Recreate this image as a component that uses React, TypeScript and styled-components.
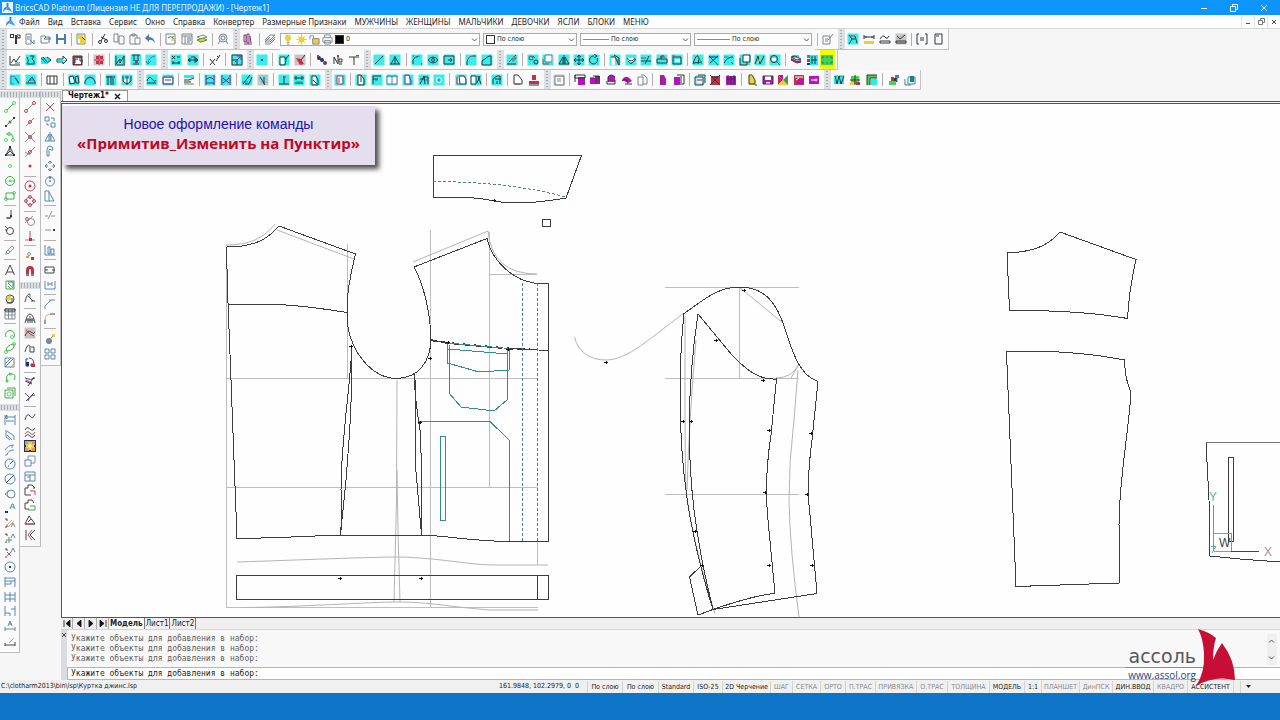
import React from 'react';
import styled, { createGlobalStyle, css } from 'styled-components';

const ui = '"Noto Sans", "Open Sans", sans-serif';
const dialog = '"DejaVu Sans Condensed", "DejaVu Sans", sans-serif';

const Global = createGlobalStyle`
  *, *::before, *::after { box-sizing: border-box; }
  body { margin: 0; background: #0d74c8; font-family: ${ui}; font-size: 8px; color: #222; }
  button, select, input { font: inherit; color: inherit; margin: 0; }
  a { text-decoration: none; color: inherit; }
`;

const Shell = styled.div`
  display: flex;
  flex-direction: column;
  min-height: 100vh;
  overflow: hidden;
`;

/* ---------- title and menu ---------- */

const TitleBar = styled.header`
  display: flex;
  align-items: center;
  height: 15px;
  padding: 0 2px;
  gap: 2px;
  background: #0e95fd;
  color: #e6f5ff;
`;

const TitleText = styled.h1`
  flex: 1;
  margin: 0;
  font-size: 8px;
  line-height: 15px;
  font-weight: 400;
`;

const WindowButton = styled.button<{ $small?: boolean }>`
  display: grid;
  place-items: center;
  width: ${(p) => (p.$small ? 13 : 28)}px;
  height: 12px;
  padding: 0;
  border: 0;
  border-left: ${(p) => (p.$small ? '1px solid #e2e2e2' : '0')};
  background: none;
`;

const MenuBar = styled.nav`
  display: flex;
  align-items: center;
  height: 14px;
  padding-left: 5px;
  background: #fff;
  border-bottom: 1px solid #d6d6d6;
`;

const MenuList = styled.div`
  display: flex;
  flex: 1;
  gap: 8px;
  margin-left: 3px;
`;

const MenuLink = styled.a`
  font-size: 8px;
  line-height: 12px;
  color: #1c1c1c;
  white-space: nowrap;
`;

/* ---------- toolbars ---------- */

const Toolbars = styled.section`
  background: #f6f6f6;
`;

const ToolRow = styled.div`
  display: flex;
  height: 21px;
  & + & { height: 20px; }
`;

const ToolGroup = styled.div<{ $width: number }>`
  display: flex;
  align-items: stretch;
  flex: 0 0 ${(p) => p.$width}px;
  padding-right: 2px;
  background: #fafafa;
  border-bottom: 1px solid #c4bfc2;
  &:last-child { border-right: 1px solid #c9c4c7; }
`;

const Grip = styled.span<{ $flat?: boolean }>`
  flex: none;
  background-color: #dcdfe3;
  background-image: radial-gradient(#a9acb1 1px, transparent 1px);
  ${(p) =>
    p.$flat
      ? css`height: 7px; margin-bottom: 2px; background-size: 3px 7px;`
      : css`width: 7px; background-size: 7px 3px;`}
`;

const Tool = styled.button<{ $glow?: boolean }>`
  display: grid;
  place-items: center;
  flex: 1 1 0;
  min-width: 0;
  min-height: 0;
  padding: 0;
  border: 0;
  background: ${(p) => (p.$glow ? '#f4fb04' : 'none')};
  svg { display: block; }
`;

const Divider = styled.i<{ $flat?: boolean }>`
  flex: 0.35 1 0;
  display: grid;
  place-items: center;
  &::before {
    content: '';
    background: #b4b0b2;
    ${(p) => (p.$flat ? css`width: 12px; height: 1px;` : css`width: 1px; height: 13px;`)}
  }
`;

const Picker = styled.label<{ $width: number }>`
  position: relative;
  display: flex;
  align-items: center;
  align-self: center;
  flex: 0 0 ${(p) => p.$width}px;
  height: 13px;
  margin-right: 3px;
  padding-left: 2px;
  gap: 2px;
  background: #fff;
  border: 1px solid #a9a9a9;
  & > svg { flex: none; }
`;

const PickerSelect = styled.select`
  appearance: none;
  flex: 1;
  min-width: 0;
  height: 11px;
  padding: 0;
  border: 0;
  background: none;
  font-family: ${dialog};
  font-size: 7px;
  line-height: 11px;
`;

const Swatch = styled.span<{ $color: string }>`
  flex: none;
  width: 9px;
  height: 9px;
  background: ${(p) => p.$color};
  border: 1px solid #333;
`;

const LineSample = styled.span<{ $length: number }>`
  flex: 0 0 ${(p) => p.$length}px;
  height: 1px;
  background: #8a8a8a;
`;

/* ---------- work area ---------- */

const Work = styled.main`
  display: flex;
  flex: 1 1 auto;
  background: #f6f6f6;
`;

const Rails = styled.aside`
  display: flex;
  align-items: flex-start;
  flex: 0 0 61px;
  padding-top: 1px;
`;

const Rail = styled.div`
  display: flex;
  flex-direction: column;
  flex: 1;
  border-right: 1px solid #bdbdbd;
  border-bottom: 1px solid #bdbdbd;
  background: #fafafa;
`;

const RailGroup = styled.div<{ $height: number }>`
  display: flex;
  flex-direction: column;
  height: ${(p) => p.$height}px;
  padding-bottom: 4px;
`;

const Stage = styled.div`
  display: flex;
  flex-direction: column;
  flex: 1;
  min-width: 0;
`;

const FileTabs = styled.div`
  display: flex;
  height: 12px;
  padding-left: 1px;
  border-bottom: 1px solid #555;
`;

const FileTab = styled.div`
  display: flex;
  align-items: center;
  gap: 5px;
  height: 11px;
  padding: 0 6px 0 5px;
  border: 1px solid #999;
  border-bottom: 0;
  background: #fff;
  font: 700 8px/10px ${dialog};
  color: #111;
`;

const PlainButton = styled.button`
  display: grid;
  place-items: center;
  padding: 0;
  border: 0;
  background: none;
`;

const Canvas = styled.div`
  position: relative;
  flex: 1 1 auto;
  margin-top: 1px;
  border-top: 1px solid #555;
  border-left: 1px solid #555;
  border-bottom: 1px solid #555;
  background: #fefefe;
  overflow: hidden;
  & > svg { display: block; width: 100%; height: 513px; }
`;

const Notice = styled.div`
  position: absolute;
  left: 0;
  top: 2px;
  width: 313px;
  height: 59px;
  padding-top: 9px;
  background: #e5deee;
  box-shadow: 4px 4px 5px rgba(0, 0, 0, 0.7);
  text-align: center;
`;

const NoticeLead = styled.p`
  margin: 0;
  font: 400 14px/19px "Liberation Sans", sans-serif;
  color: #2310b4;
`;

const NoticeTitle = styled.p`
  margin: 0;
  font: 700 15px/19px "Open Sans", sans-serif;
  color: #c3061f;
`;

const SheetTabs = styled.div`
  display: flex;
  align-items: center;
  height: 11px;
  background: #efefef;
  font-family: ${dialog};
`;

const SheetStep = styled.button`
  display: grid;
  place-items: center;
  width: 12px;
  height: 11px;
  padding: 0;
  border: 0;
  border-right: 1px solid #aaa;
  background: none;
`;

const SheetTab = styled.button<{ $active?: boolean }>`
  height: 11px;
  padding: 0 1px;
  border: 0;
  border-right: 1px solid #777;
  background: ${(p) => (p.$active ? '#fff' : 'none')};
  font-weight: ${(p) => (p.$active ? 700 : 400)};
  line-height: 10px;
`;

const Console = styled.section`
  display: flex;
  height: 51px;
  border-top: 1px solid #d5d5d5;
`;

const ConsoleGrip = styled.div`
  display: flex;
  flex-direction: column;
  align-items: center;
  flex: 0 0 6px;
  padding-top: 2px;
  background: #d9dce1;
`;

const ConsoleBody = styled.div`
  display: flex;
  flex-direction: column;
  flex: 1;
  font: 400 8px/10px "DejaVu Sans Mono", monospace;
`;

const History = styled.div`
  display: flex;
  flex: 1;
  justify-content: space-between;
  padding: 4px 3px 2px 4px;
  background: #f8f8f8;
  color: #5d5d5d;
  white-space: pre-line;
`;

const Scroll = styled.div`
  display: flex;
  flex-direction: column;
  justify-content: space-between;
  width: 10px;
  padding: 4px 0;
  background: #f0f0f0;
`;

const CommandInput = styled.input`
  width: 100%;
  height: 13px;
  padding: 0 3px;
  border: 1px solid #b5b5b5;
  border-right: 0;
  background: #fff;
  color: #1d1d1d;
`;

const StatusBar = styled.footer`
  display: flex;
  align-items: center;
  height: 13px;
  background: #f0f0f0;
  font: 400 7px/13px ${dialog};
`;

const StatusPath = styled.span`
  flex: 1;
  padding-left: 1px;
  white-space: nowrap;
`;

const StatusCoords = styled.output`
  flex: 0 0 88px;
  white-space: nowrap;
`;

const StatusItem = styled.button<{ $width: number; $off?: boolean }>`
  flex: 0 0 ${(p) => p.$width}px;
  height: 12px;
  padding: 0;
  border: 0;
  border-left: 1px solid #d4d4d4;
  background: none;
  color: ${(p) => (p.$off ? '#8b8b8b' : '#1d1d1d')};
  line-height: 12px;
  white-space: nowrap;
`;

const TaskStrip = styled.div`
  height: 27px;
  background: #0d74c8;
`;

const Brand = styled.a`
  position: absolute;
  right: 44px;
  bottom: 33px;
  display: flex;
  align-items: flex-end;
`;

const BrandWords = styled.span`
  display: flex;
  flex-direction: column;
  align-items: flex-end;
  margin-right: -8px;
  padding-bottom: 5px;
`;

const BrandName = styled.span`
  padding-left: 3px;
  padding-right: 8px;
  border-bottom: 1px solid #858b98;
  font: 400 19px/21px "DejaVu Sans", sans-serif;
  color: #55555a;
`;

const BrandUrl = styled.span`
  padding-right: 8px;
  font: 400 10px/14px "Open Sans", sans-serif;
  color: #1e3f80;
`;

const Frame = styled.div`
  position: relative;
  display: flex;
  flex-direction: column;
  flex: 1;
`;

/* ---------- icon set ----------
   Each entry is "Label; c d; C d": a lower-case colour key strokes the path,
   an upper-case key fills it. "~" puts the icon on a cyan tile, "!" on a grey one. */

const ink: Record<string, string> = {
  k: '#30373d', r: '#c3304a', g: '#3f9a45', b: '#4a7dad', c: '#18f2f0', m: '#b414bc',
  y: '#ecd03a', w: '#ffffff', s: '#7b868d', n: '#1c2f80', t: '#15877f', l: '#43d552', p: '#7f2a72', o: '#dc9a4c',
};

const Glyph = ({ spec, size = 12, weight = 1 }: { spec: string; size?: number; weight?: number }) => {
  const parts = spec.split(';').slice(1).map((s) => s.trim());
  return (
    <svg width={size} height={size} viewBox="0 0 12 12" aria-hidden="true">
      {parts.map((part, i) => {
        if (part === '~') return <rect key={i} x=".5" y=".5" width="11" height="11" fill="#35eeee" />;
        if (part === '!') return <rect key={i} x=".5" y=".5" width="11" height="11" fill="#c9c5c4" />;
        const key = part[0];
        const solid = key === key.toUpperCase();
        const color = ink[key.toLowerCase()];
        return <path key={i} d={part.slice(2)} fill={solid ? color : 'none'} stroke={solid ? 'none' : color} strokeWidth={weight} />;
      })}
    </svg>
  );
};

const ring = (x: number, y: number, r: number) => `M${x - r} ${y}a${r} ${r} 0 1 0 ${2 * r} 0a${r} ${r} 0 1 0 ${-2 * r} 0z`;
const node = (x: number, y: number) => ring(x, y, 1.5);

const rowFile1 = [
  'New wizard; K M1 1h4v4H1z; W M2 2h2v2H2z; K M6 2h2v9H6z; k M8 2h3v3M8 5h3; r M8 3l2 2',
  'New; s M2 1h5v10H2zM3 4h3M3 6h3; b M6 7l4 4M10 7v4',
  'Open; s M1 3h4l1 1h4v2M1 3v7h7; b M4 6h7M9 4v6M4 6l2-2',
  'Save; B M1 1h10v10H1z; W M3 1h6v4H3z; W M3 7h6v4H3z',
  '|',
  'Render; s M1 1h8v10H1z; Y M2 2h5v4H2z; Y M4 5h6v5H4z; k M6 4l3 3',
  '|',
  'Cut; k M8 1L4 8M4 4l6 3; k ' + ring(3, 9, 1.5) + '; k ' + ring(9, 8, 1.5),
  'Copy; s M1 1h4v8H1zM6 3h4l1 1v7H6z',
  'Paste; s M1 2h7v9H1zM3 1h3v2H3z; W M6 5h5v6H6z; s M6 5h5v6H6z',
  'Undo; B M1 5l4-4v3q5 0 6 6q-3-4-6-3v2z',
  '|',
  'Regen; s M1 1h9v10H1z; g M3 5q3-3 5 0M8 3v3; o M6 7h4v3',
  'Properties; s M1 1h10v10H1zM1 3h10M4 3v8; b M6 5h4M6 7h4M6 9h3',
  'Layers; s M1 4l6-2 4 2-6 2z; Y M1 7l6-2 4 2-6 3z; g M1 7l6-2 4 2-6 2z',
  '|',
  'Zoom; s ' + ring(6, 5, 4) + '; b ' + ring(6, 5, 2) + '; s M3 8L1 11M9 8l2 3',
];
const rowFile2 = ['Book; p M2 2h2v7H2zM5 1h2v9H5zM2 11h8M8 3l1 7', '|', 'Layer list; s M1 7l5-5h5l-5 5zM1 9l5-5M1 11h5l5-5M1 9h5l5-5'];
const rowFile3 = [
  'Dimension check; ~; k M2 2l3 4-3 5M5 6h3M8 3l2 7; r M3 3h5',
  'Linear gauge; k M1 4h10M1 2v4M11 2v4M3 3v2M9 3v2; Y M1 8h10v3H1z',
  'Path gauge; k M1 6q3-5 5-2t4-1M1 8h10v2H1z',
  'Area gauge; !; k M2 3l3 3 5-4M1 8h10v2H1z',
  '|',
  'Match; k M3 1H1v10h2M9 1h2v10H9M4 5h4M4 7h4',
  'Sheet; k M3 1h7v10H3zM4 3h3',
];

const row2a = [
  'Graph; k M1 2v9h10M2 9l3-4 2 3 4-6; t M6 9h5',
  'Part; ~; k M2 3q3 4 0 7h7V7l-2-2 2-3H5',
  'Wave right; C M1 3h6l4 3-4 4H1z; k M1 4l5 5M3 3l4 5M7 3l4 3-4 3',
  'Arrow; k M1 5h6V2l4 4-4 4V8H1z; C M2 6h8v1H2z',
  'Frame; R M1 2h9v9H1z; W M3 4h6v6H3z; k M1 2h9v9H1z; k M3 9V5h3M8 3v4h3',
  '|',
  'Target; !; R M3 2h3v3H3zM7 2h3v3H7zM3 7h3v3H3zM7 7h3v3H7z; r M6 1v10M1 6h10',
  '|',
  'Bars; ~; k M2 2v8M10 2v8M2 10l4-5v4l4-7M1 11h10',
  'Tree; ~; k M2 1h8M4 1v6M8 1v6M3 10h6; R M5 6h3v3H5z',
  'Back turn; ~; b M10 2Q4 3 3 9M1 7l2 3 3-3',
];
const row2b = ['Width; ~; k M2 2l3 3M5 2L2 5M7 3h3M2 9h8M3 7v3M9 7v3', 'Swap; ~; k M1 6h10M1 6l2-2v4zM11 6L9 4v4z; k M4 3h4v6', '|', 'Formula; k M1 5l5 6M6 5l-5 6M7 7l4-6M8 2l2 2', '|', 'Resize; ~; k M1 1h10v10H1zM1 6h5v5; p M4 8l5-5M6 2h4v4'];
const row2c = ['Dot; ~; N M5 5h2v2H5z', '|', 'Pocket edit; ~; W M2 3h4v7H2z; k M2 3h5l1 3-1 5H2z; k M7 6l4-5', 'Brush; !; k M7 6l4-5; R M2 4l5 1 3 5-4 1z', '|', 'Link; N ' + ring(3, 4, 2) + '; N ' + ring(6, 6, 2) + '; P ' + ring(9, 9, 2) + '; R M1 1h2v2H1z', 'Number; k M2 10V3l4 7V3M7 5h3v3H7zM7 10h3; R M5 1h2v2H5z', 'Text; k M1 3h10M6 3v8; R M8 1h3v1H8z'];
const row2d = ['Line; ~; k M2 10L10 2', 'Fan; ~; k M6 2v8M6 3L2 10M6 3l4 7M1 10h10', '|', 'Arc; ~; k M2 10V6q1-3 6-4M2 2h1M10 10h1; b M3 4l6-2', 'Ellipse; ~; k M1 6q5-6 10 0q-5 6-10 0z; k ' + ring(6, 6, 1.5), 'Box; ~; k M1 2h10v8H1zM5 6h4M7 4l2 2-2 2', '|', 'Fillet; ~; k M2 11V8; k M8 2h3; r M2 8q1-6 6-6', 'Chamfer; ~; k M1 11V7l7-5h2v9z'];
const row2e = [
  'Erase; ~; k M1 10h9M3 8l7-7; S M5 5l3-3 3 2-4 4z', '|',
  'Node copy; ~; w ' + ring(4, 4, 2) + '; k ' + ring(4, 4, 2) + '; k ' + ring(9, 8, 2) + '; r M6 2l2 2',
  'Copy shape; ~; W M3 1h8v7H3z; b M3 1h7v7H3z; r M1 5v5h6', 'Mirror; ~; k M6 1v10M5 3v7H1zM7 3v7h4z', 'Move; ~; k M6 1v10M1 6h10M4 3l2-2 2 2M4 9l2 2 2-2M3 4L1 6l2 2M9 4l2 2-2 2', 'Rotate; ~; k M9 4a4 4 0 1 1-3-2M6 0l3 2-3 2', '|',
  'Offset; ~; W M2 3h4v8H2z; k M2 3h4l4 8M5 1l5 3v7; r M9 5v5', 'Smooth; ~; W M3 4h6v4H3z; k M2 4q4 6 8 0M3 7l3 3 5-5', 'Trim; ~; k M1 7h10M5 10l4-8; r M1 4h5', 'Join; ~; k M1 5h10v4H1zM5 5V2h3; r M4 3h5', 'Patch; ~; k M2 3h8v7H2z; W M4 5h5v3H4z; r M1 2h3', '|',
  'Angle; ~; k M1 10Q4 0 6 2t0 8M2 9l8-1; g M6 2l4 8', 'Cross; ~; k M1 2l9 9M2 9l8-7; n M1 3h9', 'Curve; ~; k M1 9q3-6 9-6M8 8l2 2; b M1 3h4', 'Layers copy; ~; W M4 1h6v7H4z; k M4 1h7v7H4zM1 4v7h7V8', 'Zigzag; ~; k M1 10l3-8 2 8 4-8; y M4 9l3-6', 'Magnify; ~; k ' + ring(5, 5, 3.5) + '; W M3 4h4v3H3z; r M8 8l3 3', '|',
  'Stack; C M2 1h7v3H2z; k M1 3l4-1 6 3-4 1zM1 6l6 3 4-1; P M1 4l6 3 4-1v2L7 9 1 6z', 'Grid; C M4 1h8v10H4z; B M1 1h3v3H1z; R M1 5h3v3H1z; N M1 9h3v2H1z; k M6 2v8M9 2v8M5 6h6',
  '*Dashed; L M0 1h12v10H0z; t M1 3h2M5 3h2M9 3h2M1 9h2M5 9h2M9 9h2M1 3v2M11 3v2M1 7v2M11 7v2',
];

const row3a = ['Front; ~; b M2 2q6 0 7 7M2 2v8h3; k M6 4l4 5', 'Sole; ~; k M1 9h10M3 8l4-5 3 5; r M5 6h3', '|', 'Panels; W M1 1h10v10H1z; k M1 2h10v8H1zM4 2v8M8 2v8', '|', 'Halves; ~; W M2 3l3-1 2 6-4 2z; k M1 3l4-1 2 7-5 1zM7 3l3-1 1 7H8z', 'Arch; ~; k M1 10V7q5-8 10 0v3; r M2 6q4-5 8 0', '|', 'Darts; ~; k M3 2v9M6 2v9M8 4v7M1 3h9; g M6 6h3', 'Hooks; ~; W M3 5h5v4H3z; k M2 2v5q4 5 8 0V2M6 2v9; r M4 3h4'];
const row3b = ['Cap; ~; k M1 7q2-6 5-2t4 1M1 9h9', 'Bag; ~; W M2 4h8v5H2z; p M1 3h10v7H1zM3 6h6', '|', 'Lines; C M1 1h10v3H1z; k M1 6h5l5-2M1 8h7; g M1 10h10', '|', 'Bridge; ~; p M2 1v10M10 1v10M2 6q4-5 8 0M2 9h8', 'Bridge cross; ~; p M2 1v10M10 1v10M3 9l6-5M3 4l6 5', '|', 'Slant; ~; k M2 10L9 1M4 10h4l3-7; b M1 8h6', 'Pleat; !; c M2 2h8M2 5h8M3 8h8; k M3 3l5 8M7 3v7', '|', 'Anchor; ~; k M1 10h10M6 2v8; r M5 3h3', 'Width mark; ~; k M1 4h10M3 2v4M9 2v4M2 9h8; g M3 8h6', 'Sleeve; ~; W M3 2h4v8H3z; k M3 2h4l2 4v5H3zM4 6l4 4'];
const row3c = ['Pocket new; ~; W M3 2h5v8H3z; r M3 2h6v8H3zM5 4v5', '|', 'Pocket; ~; W M3 2h5v8H3z; k M3 1h3l3 4v6H3zM6 2v6', 'Corner; ~; k M2 2h8M2 2v8M2 5h5; r M4 6h3', 'Open book; ~; W M1 3h10v7H1z; b M1 2h4l1 1 1-1h4v8H1zM6 3v7', 'Pocket cut; ~; W M3 2h4v8H3z; p M3 1h4l2 6v3H3z', 'Pattern; ~; k M2 10l4-8 1 8M5 3h5v7M2 5h4; r M7 6h3', 'Ring; ~; w ' + ring(6, 6, 2.5) + '; b ' + ring(6, 6, 1), '|', 'Two parts; ~; W M3 2h7v8H3z; r M2 3v7h3; k M4 2h5l2 3v5H5z', 'Mark part; ~; W M1 2h5v8H1z; k M1 2h5v8H1zM8 2l3 8M10 2L7 9', '|', 'Fold; ~; k M2 10V5l4-3h3v8M4 5h6M6 7v3', '|', 'Pocket out; W M2 2h6v8H2z; k M2 1h4l4 5v4H2z; r M3 10h5', 'Stamp; R M4 1h4v5H4zM1 7h10v3H1z; k M1 11h10'];
const row3d = ['Print part; !; W M2 3h8v7H2z; s M2 2h9v9H2zM4 5h4M4 7h4', '|', 'Solid part; M M4 3h7v8H4z; k M1 1h10v3H1z; k M1 1v7', 'Solid shape; M M1 4h6v6H1z; P M6 2h5v8H6z; k M4 2h6v3M1 4h4', 'Cup; M M3 3q3-4 7 0v5H3z; k M2 7v3h8V6M3 8V3q3-4 7 0', 'Cap solid; M M1 6q4-7 10 1L7 9z; k M1 7q4-4 6 2M4 10h7', 'Pages; s M2 3h5v8H2zM5 1h3l3 3v6H7', '|', 'Pocket solid; M M3 1h4l2 4v6H3z; P M3 1h1v10H3z', 'Pocket half; M M1 3h6v8H1z; k M4 1h7v9H7M8 2v7', '|', 'Board; c M2 2h8v8H2z; k M1 3h8v8H1zM4 1h7v8M3 6h5', 'Cross part; R M2 2h9v9H2z; k M1 1l10 10M11 1L1 11M3 3h6', 'Weave; M M1 2h10v9H1z; k M3 1v9M6 2v9M9 1v9M2 5h8', '|', 'Yellow part; Y M3 2h4l2 5v4H3z; k M3 1h3l3 5v4H3zM9 11h2', 'Save part; M M1 2h10v8H1z; W M3 2h6v4H3z; W M4 8h4v2H4z; k M1 2h10v8H1z', 'Star; R M1 1l5 5-5 5z; Y M1 11l5-5 5 5z; G M11 1L6 6l5 5z; M M1 1h5v5z', 'Dots; R M1 1h10v10H1z; M M4 5h7v5H4z; w M2 3h8M3 6l3-2', 'Key; M M1 2h10v8H1z; w M3 6h4; w ' + ring(8, 6, 1)];
const row3e = ['Weave cyan; C M1 2h10v8H1z; g M2 2h3M6 2h5; k M2 2l2 8 2-8 2 8 3-8', 'Compass; L M2 2h8v8H2z; Y M1 8h4v3H1z; k M6 1v10M1 6h10; R M7 8h4v3H7z', 'Corner solid; C M5 5h6v6H5z; L M1 1h10v3H4v7H1z; k M1 11V1h10M4 11V4h7', '|', 'Cherry; K M5 4h4v4H5z; R M3 3h3v4H3z; L M1 7h7v4H1z; B M7 1h4v3H7z; b M9 4v4', 'Cubes; b M4 3h7v7H4zM1 5v6h6; T M6 2h4v6H6z'];

const rail1a = [
  'Line; g M3 9L9 3; l ' + node(2, 10) + '; l ' + node(10, 2), 'Ray; g M2 10l8-8; K M1 9h2v2H1z; G ' + node(6, 6) + '; K M9 1h2v2H9z', 'Polyline; g M2 3h5q4 4 0 6; l ' + node(2, 9) + '; l ' + node(9, 9) + '; l ' + node(5, 3), 'Polygon; k M6 2L2 10h8zM6 2v4L2 10M6 6l4 4; K M5 1h2v2H5zM1 9h2v2H1zM9 9h2v2H9z', 'Point; l ' + ring(6, 6, 1.5), 'Circle; g ' + ring(6, 6, 4.5) + '; l M5 6h6; l ' + ring(6, 6, 1), 'Rectangle; g M2 3h8v6H2z; l ' + node(2, 9) + '; l ' + node(10, 3), '|',
  'Curve node; k M7 1v8H3M3 8v2M5 8v2; K M6 6h2v2H6z', 'Loop; k M1 2l3 3M1 6h2; k ' + ring(6, 7, 3.5), '|', 'Pencil; s M2 8l6-6 2 2-6 6zM4 6l2 2M2 8v3', '|',
  'Text; k M1.500 11L6 1l4.500 10M3 8h6', 'Hatch; g M2 2h8v8H2zM4 4l5 5M4 7l3 3; t M4 3h5v5', 'Ball; k ' + ring(6, 6, 4) + '; Y ' + ring(5, 5, 2.500) + '; k M8 5v5H3', 'Table; s M1 1h10v10H1zM1 4h10M1 7h10M4.500 1v10M8 1v10; k M1 1h10v2H1z', '|',
  'Arc; g M2 9a4.500 4.500 0 1 1 8 0; l ' + node(8, 9), 'Ellipse; g M2 9q0-6 8-7q1 7-8 7z; l ' + node(2, 10) + '; l ' + node(10, 2), 'Hatch edit; b M1 1h9v9H1zM1 7l6-6M1 10l8-8; o M6 11l5-6', 'Arc nodes; g M3 9q-2-7 4-7t3 6; L ' + node(3, 9) + '; L ' + node(6, 2), 'Region; g M1 3h8v8H1zM3 1h8v8; l ' + ring(5, 7, 2),
];
const rail1b = [
  'Linear dimension; b M1 1v10M11 1v10M1 3h10M2 7h8M1 3l2-2v4z', 'Aligned dimension; b M2 1v7l4 3M3 2l7 5v4M3 6l5 5', 'Arc length; b M1 6q3-5 9-5M3 11q1-5 7-5M8 1v3; s M1 11h2', 'Radius; b ' + ring(6, 6, 5) + '; k M6 6l3-3M4 8h1', 'Diameter; b ' + ring(6, 6, 5) + '; k M2 10l8-8', 'Jogged; b ' + ring(7, 6, 4) + '; s M1 6l4-3M1 6l4 3', 'Leader; b M6 7l2-5h1l2 5M7 5h3; K M1 9h3v2H1z', 'Leader edit; k M1 2h2v2M1 10h2V8; o M3 8l5-5M4 10l6-6; b M7 10l2-4 2 4', 'Leader add; k M1 2h2v2M1 10h2; g M5 5v6M2 8h6; b M7 6l2-4 2 4', 'Leader remove; k M1 2h2v2M1 10h2; r M3 5l4 4M7 5l-4 4; b M7 5l2-4 2 4', 'Centre; b ' + ring(6, 6, 5) + '; K M5 5h2v2H5z', 'Baseline; b M1 1v10M1 2h10v3H1M1 8h6V5M11 5v6', 'Continue; b M1 1v10M6 1v10M11 1v10M1 4h10M1 8h10', 'Ordinate; b M1 1v10M11 1v10M1 8h5M6 8v3M7 4h4', 'Dimension text; b M4 6l2-5 2 5M5 4h3; b M1 7v4M11 7v4M1 9h10', 'Dimension edit; k M1 10h10M1 8v3M11 7v4; o M5 8l5-5',
];
const rail2a = [
  'End point; s M3 9l6-6; r ' + node(2, 10) + '; r ' + node(10, 2), 'Middle; s M2 10l8-8; r ' + ring(6, 6, 1.500), 'Intersection; s M1 1l10 10M1 11L11 1; r ' + node(6, 6), 'Nearest; s M1 11L11 1M1 6l5 3; r ' + node(6, 6), 'Node; R ' + ring(6, 6, 1.500), '|', 'Centre snap; r ' + ring(6, 6, 5) + '; R ' + ring(6, 6, 1.500), 'Quadrant; s ' + ring(6, 6, 4) + '; r ' + node(6, 2) + '; r ' + node(6, 10) + '; r ' + node(2, 6) + '; r ' + node(10, 6), '|', 'Tangent; s ' + ring(7, 7, 3.500) + '; r ' + node(3, 4) + '; s M1 8l8-7', 'Perpendicular; s M1 10h10; r M6 1v8; R M5 8h3v3H5z', '|', 'Clear snap; s ' + ring(5, 4, 1.500) + '; R M7 7h3v3H7z; O M2 6h3v2H2z', 'Magnet; R M2 11V5q0-4 4-4t4 4v6H7V5q-1-2-2 0v6z; S M2 9h3v2H2zM7 9h3v2H7z',
];
const rail2b = [
  'Wave; k M1 10q2-9 5-8M4 4l5 5M7 9h4; b M6 2v4', '|', 'Fan curve; k M1 11q2-9 5-9t5 9M4 6v5M6 4v7M8 6v5M2 8h8', 'Surface; !; k M1 9q3-7 6-4t4 0; r M2 3q4 5 8 6', 'Segment; k M1 10q2-9 5-6v6M7 5h3v5H6', 'Rotate part; n M4 3H2v7h3; k M5 2q5 0 5 7H6M8 7v4; R M7 8h4v3H7z; N M2 6h3v4H2z', '|', 'Cut curve; k M1 2q6 3 10 0M4 10l6-9M1 5l7 3; p M2 4l6 3', 'Split curve; k M1 2l5 5M2 10l8-8M4 10q2-6 7-6; p M2 3l4 4', '|', 'Spline; k M1 9q2-8 5-4t5-2', 'Waves; k M1 4q2-4 5-1t5-1M1 11q2-4 5-1t5-1; r M1 8q2-4 5-1t5-1', 'Flower; N M0 0h12v12H0z; O M1 1h10v10H1z; N M1 5h2v2H1zM9 5h2v2H9zM5 10h2v1H5z; Y M4 2h4v8H4zM2 4h8v4H2z; w M5 5h2v2H5z', 'Shade; b M1 5h6v6H1z; s M4 1h7v7H7M4 1v4', 'Screens; b M1 2h10v9H1zM1 5h10M6 5v6; s M3 7h3', 'Part red; k M1 4h3V1h4l3 3H9M1 4v7h6; r M6 7h5v4', 'Part green; k M1 4h3V1h4l2 3M1 4v6h4; g M6 7h5v4H4', 'Triangle; k M1 10L5 2l6 8zM4 8l3-3; r M1 10h10', 'Chevrons; k M2 1v10M11 1L6 6l5 5; r M8 1L4 6l4 5',
];
const rail3 = [
  'Delete; r M2 2l8 8M10 2l-8 8', 'Copy; b M1 1h4v4H1zM7 7h4v4H7zM3 7v2h2M7 2h3v3', 'Mirror; b M6 1v10M5 3v7H1zM7 3v7h4z', 'Offset; b M3 11V5q0-4 3-4t3 4H7q-1-2-2 0v6z', 'Move; b M6 1v3M6 8v3M1 6h3M8 6h3M4 3l2-2 2 2M4 9l2 2 2-2M3 4L1 6l2 2M9 4l2 2-2 2', 'Rotate; b ' + ring(6, 6.500, 4.500) + '; n M6 1v3M5 6h2', 'Skew; b M1 11V1h4v10zM5 2l5 9H5', '|', 'Break; s M1 7h3M7 7h4M4 10l4-8', 'Dash; s M1 6h6; K M9 5h2v2H9z', '|', 'Align; b M1 1v10M4 3h2v7H4zM7 5h3v5H7zM1 11h10', '|', 'Stretch; k M1 3h9v6H1zM8 6h3M1 6h3', 'Extend; b M1 2v8h10V2M4 5h4M4 3v4M8 3v4', '|', 'Chamfer; b M1 11V8M5 2h6; s M1 8l6-6', 'Fillet; k M1 11V7M6 1h5; o M1 7q0-6 6-6', '|', 'Explode; S ' + ring(5, 8, 3) + '; Y M8 1h3v3H8z; s M7 5l2-2', 'Array; b M1 1h4v4H1zM7 1h4v4H7zM1 7h4v4H1zM7 7h4v4H7z',
];

const Tools = ({ items, flat }: { items: string[]; flat?: boolean }) => (
  <>
    {items.map((spec, i) => {
      if (spec === '|') return <Divider key={i} $flat={flat} />;
      const glow = spec[0] === '*';
      return (
        <Tool key={i} $glow={glow} type="button" aria-label={spec.split(';')[0].replace('*', '')}>
          <Glyph spec={spec} weight={flat ? 0.9 : 1} />
        </Tool>
      );
    })}
  </>
);

const Group = ({ items, width }: { items: string[]; width: number }) => (
  <ToolGroup $width={width}>
    <Grip />
    <Tools items={items} />
  </ToolGroup>
);

const Caret = ({ up }: { up?: boolean }) => (
  <svg width="9" height="6" viewBox="0 0 9 6" aria-hidden="true">
    <path d={up ? 'M2 4.500l2.500-2.500L7 4.500' : 'M2 1.500L4.500 4L7 1.500'} fill="none" stroke="#555" />
  </svg>
);

const Logo = () => (
  <svg width="11" height="11" viewBox="0 0 12 12" aria-hidden="true">
    <rect width="12" height="12" fill="#e8f4ff" />
    <path d="M5 1h2v4L4 8l-3 3 1-4 3-2z" fill="#2d83d0" />
    <path d="M7 5l2 2 2 4-4-2-3-1z" fill="#4a9be0" />
  </svg>
);

/* ---------- drawing ---------- */

const ticks = [
  [340, 578], [421, 578], [494, 200], [606, 362], [744, 290], [716, 340], [763, 380], [683, 421], [691, 421], [769, 430],
  [811, 433], [765, 492], [807, 494], [769, 565], [812, 565], [695, 531], [702, 565], [351, 346], [430, 358], [448, 342], [508, 349], [420, 422],
];

const Drawing = () => (
  <svg viewBox="62 104 1218 513" preserveAspectRatio="xMinYMin slice" fill="none" strokeWidth="1" role="img" aria-label="Чертеж1">
    <g stroke="#bdbdbd" shapeRendering="crispEdges">
      <path d="M226.500 245V607.500H538M226 378.500H538M226 487.500H538M430.500 230V607M489.500 232V487M347.500 244V378M489 274.500H537M537.500 541V565" />
      <path d="M665 287H799M665 378.500H799M665 494.500H799M739.500 287V378" />
    </g>
    <g stroke="#b4b4b4">
      <path d="M226 245C250 245 264 238 275 224M277 230L354 259M413 262L488 231Q492 274 537 274" />
      <path d="M397 380L396.500 500L394 602M397 470L398 530L400 602" />
      <path d="M237 562C300 560 370 557 400 557C440 558 470 565 495 565H548" />
      <path d="M245 607.500C300 607 370 602 398 602C430 602 450 607 490 610H538" />
      <path d="M574.500 337C578 352 590 360 606 360C628 360 650 338 684 313M739 287L783 323M776 378Q792 378 799 364L791 378" />
      <path d="M798 370L794 420Q789 460 789 500Q790 550 799 617M685 316V400Q685 460 686 490M696 340Q689 420 687 490M686 490Q692 540 715 614" />
    </g>
    <g stroke="#3c3c3c" shapeRendering="crispEdges">
      <path d="M433.500 155.500H581.500L566 198Q520 206 494 201Q475 197 460 197.500H433.500Z" />
      <path d="M542.500 219H550V226.500H542.500Z" />
      <path d="M226.500 247C253 247 267 240 279 226L355.500 254C348 285 346 300 347.500 325C352 354 373 378.500 397 378.500C418 378 431 362 431 338C430 310 423 283 414 267L487 238.500C492 262 514 280 534 283H548.500V541.500H508C470 541 450 536 421 535H341C310 536 280 538 237 538.500L231 380L227.500 290Z" />
      <path d="M228 304.500H275Q300 305 347 312.500" />
      <path d="M352 346C350 390 341 440 341 490V530L340 535M352 346Q352 400 349 440Q346 490 340 535" />
      <path d="M414 374Q415 400 420 430Q423 480 421.500 535M415 380V460L421.500 535" />
      <path d="M430 340L448 343L509 348.500L548 350.500" />
      <path d="M430 340L448 343L509 348.500L530 349.500" strokeDasharray="7 4" strokeWidth="2" />
      <path d="M236.500 575.500H548.500V599H236.500ZM537.500 575V599" />
      <path d="M684 313.500C700 303 716 287 739 287C765 287 777 303 785 329C790 345 795 360 802 369Q807 377 818 381.500L812 440Q806 485 810 515L817 593.500L713 609.500C702 575 690 525 686 490C679 440 678 370 684 313.500Z" />
      <path d="M698 314L732 355C750 374 762 380 776.500 379L771 435Q764 480 768 520L775 593.500Q755 595 713 609.500C706 580 700 555 694 510C687 450 688 380 698 314Z" />
      <path d="M701 566L689.500 577L698 615L713 609.500" />
      <path d="M1007 253C1033 252 1048 246 1060 232L1136 259.500Q1129 290 1127.500 318.500Q1080 310 1009.500 310.500Z" />
      <path d="M1006.500 352Q1070 349 1124.500 360Q1125 380 1131 392C1129 430 1119 480 1119 525V583L1016 586.500Z" />
      <path d="M1206 442.500L1209 500L1210 556L1240 559L1280 562M1228.500 457.500H1233.500V541.500H1228.500Z" />
      <path d="M1280 442.500H1206" stroke="#777" />
    </g>
    <g stroke="#2b8f98" shapeRendering="crispEdges">
      <path d="M447.500 344V363L479 372L509 370V348M448 349L508 354M448 343L509 348.500M449 345V393L461 407L494 411L507.500 399.500V349" />
      <path d="M419 421.500H490L509 440V541M440.500 436.500H445.500V520.500H440.500Z" />
    </g>
    <g stroke="#4d8296" strokeDasharray="3 2" shapeRendering="crispEdges">
      <path d="M522.500 283V541M537.500 283V541" />
      <path d="M433 181.500C480 182 520 185 566 197" />
    </g>
    <g stroke="#111" shapeRendering="crispEdges">
      {ticks.map(([x, y]) => (
        <path key={`${x}-${y}`} d={`M${x - 2} ${y + 0.5}h4M${x + 0.5} ${y - 1}v3`} />
      ))}
    </g>
    <g fontFamily="Liberation Sans, sans-serif" fontSize="12">
      <path d="M1213.500 505V551" stroke="#8a8a8a" />
      <path d="M1213.500 533.500H1231" stroke="#a58c93" />
      <path d="M1213.500 533V551M1231.500 533V551M1211 546.500H1216L1212 553" stroke="#3fb79c" />
      <path d="M1214 551.500H1231" stroke="#b08b90" />
      <path d="M1231 551.500H1259" stroke="#444" />
      <text x="1209" y="501" fill="#57b7a0">Y</text>
      <text x="1219" y="547" fill="#444">W</text>
      <text x="1264" y="556" fill="#b98787">X</text>
    </g>
  </svg>
);

const menus = ['Файл', 'Вид', 'Вставка', 'Сервис', 'Окно', 'Справка', 'Конвертер', 'Размерные Признаки', 'МУЖЧИНЫ', 'ЖЕНЩИНЫ', 'МАЛЬЧИКИ', 'ДЕВОЧКИ', 'ЯСЛИ', 'БЛОКИ', 'МЕНЮ'];

const statuses: [string, number, boolean?][] = [
  ['По слою', 35], ['По слою', 36], ['Standard', 35], ['ISO-25', 29], ['2D Черчение', 48], ['ШАГ', 22, true], ['СЕТКА', 28, true],
  ['ОРТО', 25, true], ['П.ТРАС', 30, true], ['ПРИВЯЗКА', 41, true], ['О.ТРАС', 31, true], ['ТОЛЩИНА', 42, true], ['МОДЕЛЬ', 35],
  ['1:1', 17], ['ПЛАНШЕТ', 38, true], ['ДинПСК', 33, true], ['ДИН.ВВОД', 41], ['КВАДРО', 34, true], ['АССИСТЕНТ', 46], ['', 7],
];

const steps = [
  ['Первый', 'M2 1v7M8 1v7L4 4.500z'],
  ['Назад', 'M7 1v7L3 4.500z'],
  ['Вперёд', 'M3 1v7l4-3.500z'],
  ['Последний', 'M8 1v7M2 1v7l4-3.500z'],
];

export default function App() {
  return (
    <>
      <Global />
      <Shell>
        <TitleBar>
          <Logo />
          <TitleText>BricsCAD Platinum (Лицензия НЕ ДЛЯ ПЕРЕПРОДАЖИ) - [Чертеж1]</TitleText>
          <WindowButton type="button" aria-label="Свернуть"><svg width="8" height="8"><path d="M1 4.500h6" stroke="#fff" /></svg></WindowButton>
          <WindowButton type="button" aria-label="Развернуть"><svg width="8" height="8" fill="none" stroke="#fff"><path d="M.5 2.500h5v5h-5zM2.500 2V.5h5v5H6" /></svg></WindowButton>
          <WindowButton type="button" aria-label="Закрыть"><svg width="8" height="8"><path d="M1 1l6 6M7 1L1 7" stroke="#fff" /></svg></WindowButton>
        </TitleBar>
        <MenuBar>
          <Logo />
          <MenuList>{menus.map((m) => <MenuLink key={m} href="#">{m}</MenuLink>)}</MenuList>
          <WindowButton $small type="button" aria-label="Свернуть чертеж"><svg width="6" height="6"><path d="M1 4.500h4" stroke="#555" /></svg></WindowButton>
          <WindowButton $small type="button" aria-label="Восстановить чертеж"><svg width="7" height="7" fill="none" stroke="#777"><path d="M.5 2.500h4v4h-4zM2.500 2V.5h4v4H5" /></svg></WindowButton>
          <WindowButton $small type="button" aria-label="Закрыть чертеж"><svg width="6" height="6"><path d="M1 1l4 4M5 1L1 5" stroke="#444" /></svg></WindowButton>
        </MenuBar>

        <Toolbars>
          <ToolRow>
            <Group items={rowFile1} width={233} />
            <Group items={rowFile2} width={47} />
            <Picker $width={200}>
              <Glyph size={11} spec="; Y M3 1h5l1 4-2 3H4L2 5z; s M4 9h3M4 11h3" />
              <Glyph size={11} spec="; Y M3 3h6v6H3z; y M6 0v12M0 6h12M2 2l8 8M10 2l-8 8" />
              <Glyph size={11} spec="; s M1 6V2h4v4; Y M4 5h7v6H4z; s M4 5h7v6H4z" />
              <Glyph size={11} spec="; s M3 4V1h6v3M1 4h10v5H1zM3 7h6v4H3z" />
              <Swatch $color="#000" />
              <PickerSelect aria-label="Слой"><option>0</option></PickerSelect>
              <Caret />
            </Picker>
            <Picker $width={94}>
              <Swatch $color="#fff" />
              <PickerSelect aria-label="Цвет"><option>По слою</option></PickerSelect>
              <Caret />
            </Picker>
            <Picker $width={111}>
              <LineSample $length={26} />
              <PickerSelect aria-label="Тип линии"><option>По слою</option></PickerSelect>
              <Caret />
            </Picker>
            <Picker $width={118}>
              <LineSample $length={33} />
              <PickerSelect aria-label="Вес линии"><option>По слою</option></PickerSelect>
              <Caret />
            </Picker>
            <ToolGroup $width={23}>
              <Tools items={['|', 'Стиль; s M1 3h7v8H1zM3 6h3M3 8h3; s M6 7l5-6']} />
            </ToolGroup>
            <Group items={rowFile3} width={111} />
          </ToolRow>
          <ToolRow>
            <Group items={row2a} width={161} />
            <Group items={row2b} width={86} />
            <Group items={row2c} width={117} />
            <Group items={row2d} width={133} />
            <Group items={row2e} width={341} />
          </ToolRow>
          <ToolRow>
            <Group items={row3a} width={137} />
            <Group items={row3b} width={188} />
            <Group items={row3c} width={219} />
            <Group items={row3d} width={280} />
            <Group items={row3e} width={97} />
          </ToolRow>
        </Toolbars>

        <Frame>
          <Work>
            <Rails>
              <Rail>
                <RailGroup $height={313}><Grip $flat /><Tools flat items={rail1a} /></RailGroup>
                <RailGroup $height={248}><Grip $flat /><Tools flat items={rail1b} /></RailGroup>
              </Rail>
              <Rail>
                <RailGroup $height={191}><Grip $flat /><Tools flat items={rail2a} /></RailGroup>
                <RailGroup $height={264}><Grip $flat /><Tools flat items={rail2b} /></RailGroup>
              </Rail>
              <Rail>
                <RailGroup $height={274}><Grip $flat /><Tools flat items={rail3} /></RailGroup>
              </Rail>
            </Rails>
            <Stage>
              <FileTabs>
                <FileTab>
                  Чертеж1*
                  <PlainButton type="button" aria-label="Закрыть вкладку"><svg width="7" height="7"><path d="M1 1l5 5M6 1L1 6" stroke="#222" strokeWidth="1.500" /></svg></PlainButton>
                </FileTab>
              </FileTabs>
              <Canvas>
                <Drawing />
                <Notice>
                  <NoticeLead>Новое оформление команды</NoticeLead>
                  <NoticeTitle>«Примитив_Изменить на Пунктир»</NoticeTitle>
                </Notice>
              </Canvas>
              <SheetTabs>
                {steps.map(([label, d]) => (
                  <SheetStep key={label} type="button" aria-label={label}><svg width="9" height="9"><path d={d} fill="#111" stroke="#111" strokeWidth=".8" /></svg></SheetStep>
                ))}
                <SheetTab $active type="button">Модель</SheetTab>
                <SheetTab type="button">Лист1</SheetTab>
                <SheetTab type="button">Лист2</SheetTab>
              </SheetTabs>
              <Console>
                <ConsoleGrip>
                  <PlainButton type="button" aria-label="Закрыть панель"><svg width="6" height="6"><path d="M1 1l4 4M5 1L1 5" stroke="#444" /></svg></PlainButton>
                </ConsoleGrip>
                <ConsoleBody>
                  <History>
                    {'Укажите объекты для добавления в набор:\nУкажите объекты для добавления в набор:\nУкажите объекты для добавления в набор:'}
                    <Scroll><Caret up /><Caret /></Scroll>
                  </History>
                  <CommandInput aria-label="Командная строка" defaultValue="Укажите объекты для добавления в набор:" />
                </ConsoleBody>
              </Console>
            </Stage>
          </Work>
          <StatusBar>
            <StatusPath>C:\clotharm2013\bin\lsp\Куртка джинс.lsp</StatusPath>
            <StatusCoords>161.9848, 102.2979, 0&nbsp; 0</StatusCoords>
            {statuses.map(([label, width, off], i) => (
              <StatusItem key={i} type="button" $width={width} $off={off} aria-label={label || 'Разделитель'}>{label}</StatusItem>
            ))}
            <StatusItem type="button" $width={40} aria-label="Настройки">
              <svg width="30" height="4"><path d="M0 0h5L2.500 3z" fill="#222" /></svg>
            </StatusItem>
          </StatusBar>
          <TaskStrip />
          <Brand href="#">
            <BrandWords>
              <BrandName>ассоль</BrandName>
              <BrandUrl>www.assol.org</BrandUrl>
            </BrandWords>
            <svg width="40" height="58" viewBox="0 0 40 58" aria-hidden="true">
              <path d="M2 0Q13 3 20 9Q17 18 17 31Q20 22 26 14Q39 31 39 51Q18 46 0 57Q9 44 8 24Q7 9 2 0Z" fill="#c70f35" />
            </svg>
          </Brand>
        </Frame>
      </Shell>
    </>
  );
}
